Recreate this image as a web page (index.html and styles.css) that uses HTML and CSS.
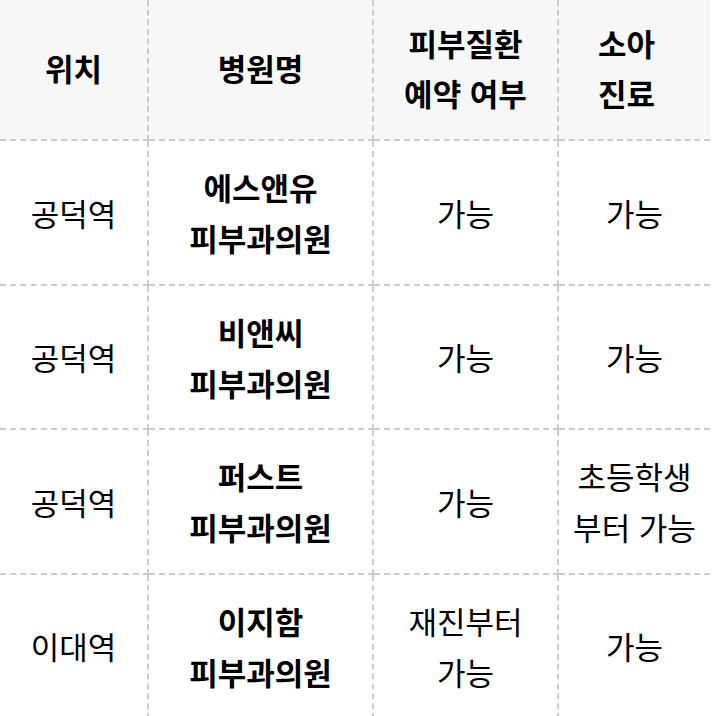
FILE: index.html
```html
<!DOCTYPE html>
<html lang="ko">
<head>
<meta charset="utf-8">
<title>피부과 목록</title>
<link rel="stylesheet" href="styles.css">
</head>
<body>
<table class="clinic-table">
  <colgroup>
    <col class="col-loc">
    <col class="col-name">
    <col class="col-skin">
    <col class="col-kids">
  </colgroup>
  <thead>
    <tr>
      <th>위치</th>
      <th>병원명</th>
      <th>피부질환 예약 여부</th>
      <th class="kids-head">소아 진료</th>
    </tr>
  </thead>
  <tbody>
    <tr>
      <td>공덕역</td>
      <td class="name">에스앤유 피부과의원</td>
      <td>가능</td>
      <td>가능</td>
    </tr>
    <tr>
      <td>공덕역</td>
      <td class="name">비앤씨 피부과의원</td>
      <td>가능</td>
      <td>가능</td>
    </tr>
    <tr>
      <td>공덕역</td>
      <td class="name">퍼스트 피부과의원</td>
      <td>가능</td>
      <td>초등학생 부터 가능</td>
    </tr>
    <tr>
      <td>이대역</td>
      <td class="name">이지함 피부과의원</td>
      <td>재진부터 가능</td>
      <td>가능</td>
    </tr>
  </tbody>
</table>
</body>
</html>
```

FILE: styles.css
```css
html, body {
  margin: 0;
  padding: 0;
  background: #ffffff;
  overflow: hidden;
}

.clinic-table {
  border-collapse: collapse;
  table-layout: fixed;
  width: 710px;
  font-family: "Noto Sans CJK KR", "Noto Sans", sans-serif;
  font-size: 31px;
  line-height: 51px;
  color: #000000;
}

.col-loc { width: 148px; }
.col-name { width: 225px; }
.col-skin { width: 185px; }
.col-kids { width: 152px; }

.clinic-table th,
.clinic-table td {
  border: 2px dashed #cccccc;
  padding: 20px 8px 20.5px;
  text-align: center;
  vertical-align: middle;
  word-break: keep-all;
}

.clinic-table th {
  background: #f7f7f7;
  font-weight: 700;
  line-height: 50px;
  padding: 18px 20px 21px;
}

.clinic-table th.kids-head {
  padding-left: 12px;
  padding-right: 28px;
}

.clinic-table td {
  font-weight: 400;
}

.clinic-table td.name {
  font-weight: 700;
}

.clinic-table thead th {
  border-top: none;
}

.clinic-table tr > :first-child {
  border-left: none;
}

.clinic-table tr > :last-child {
  border-right: none;
}
```
